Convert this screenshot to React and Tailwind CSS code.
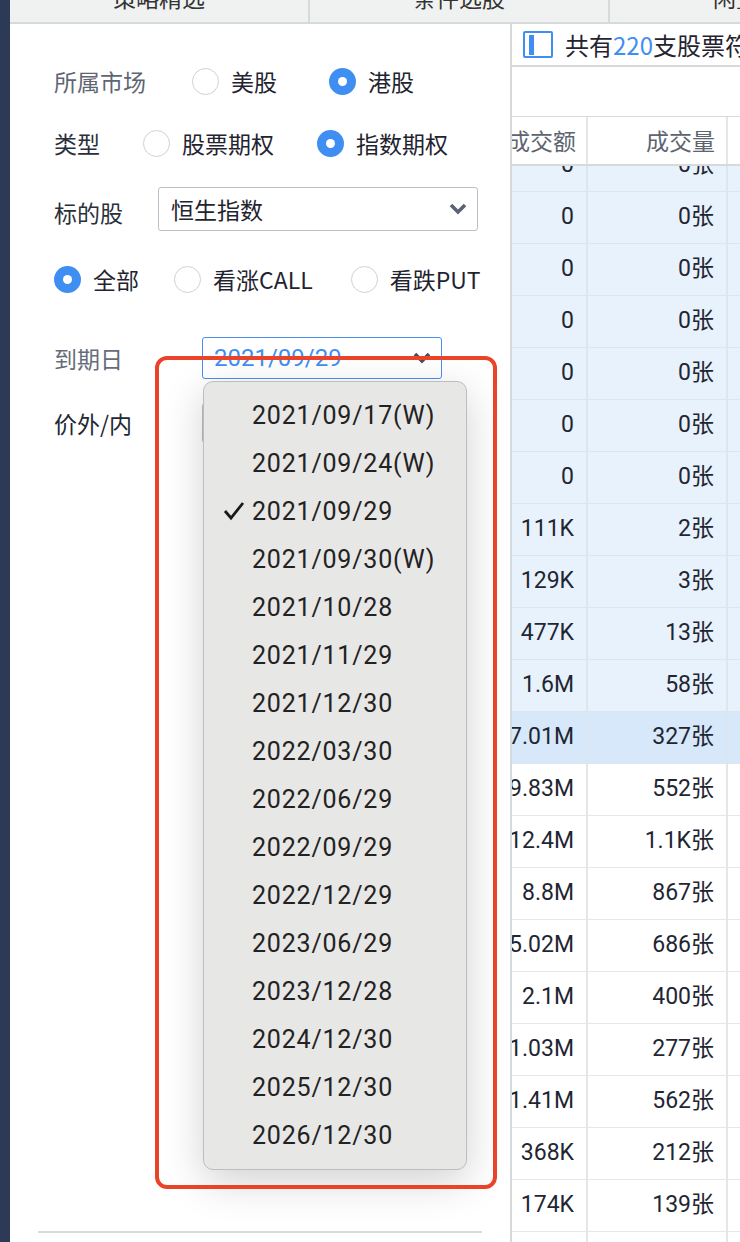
import React from "react";

const dates = [
  "2021/09/17(W)",
  "2021/09/24(W)",
  "2021/09/29",
  "2021/09/30(W)",
  "2021/10/28",
  "2021/11/29",
  "2021/12/30",
  "2022/03/30",
  "2022/06/29",
  "2022/09/29",
  "2022/12/29",
  "2023/06/29",
  "2023/12/28",
  "2024/12/30",
  "2025/12/30",
  "2026/12/30",
];

const rows = [
  ["0", "0张", "b"],
  ["0", "0张", "b"],
  ["0", "0张", "b"],
  ["0", "0张", "b"],
  ["0", "0张", "b"],
  ["0", "0张", "b"],
  ["0", "0张", "b"],
  ["111K", "2张", "b"],
  ["129K", "3张", "b"],
  ["477K", "13张", "b"],
  ["1.6M", "58张", "b"],
  ["7.01M", "327张", "s"],
  ["9.83M", "552张", "w"],
  ["12.4M", "1.1K张", "w"],
  ["8.8M", "867张", "w"],
  ["5.02M", "686张", "w"],
  ["2.1M", "400张", "w"],
  ["1.03M", "277张", "w"],
  ["1.41M", "562张", "w"],
  ["368K", "212张", "w"],
  ["174K", "139张", "w"],
  ["", "", "w"],
];

function Radio({ checked }) {
  return checked ? (
    <span className="flex h-[27px] w-[27px] shrink-0 items-center justify-center rounded-full bg-[#3f8ef2]">
      <span className="h-[9px] w-[9px] rounded-full bg-white" />
    </span>
  ) : (
    <span className="h-[27px] w-[27px] shrink-0 rounded-full border border-[#cdd1d7] bg-white" />
  );
}

function Chevron({ color = "#5b6472" }) {
  return (
    <svg width="18" height="12" viewBox="0 0 18 12">
      <polyline points="2,2 9,9 16,2" fill="none" stroke={color} strokeWidth="3.6" strokeLinejoin="miter" />
    </svg>
  );
}

function Opt({ checked, label, gapAfter = "" }) {
  return (
    <div className={`flex items-center ${gapAfter}`}>
      <Radio checked={checked} />
      <span className="ml-[12px] text-[23px] leading-none text-[#1f2430]">{label}</span>
    </div>
  );
}

export default function App() {
  const cjk = "font-['Noto_Sans_CJK_SC','Noto_Sans',sans-serif]";
  return (
    <div className={`relative flex h-[1242px] w-[740px] overflow-hidden bg-white ${cjk}`}>
      <div className="w-[10px] shrink-0 bg-[#2c3a57]" />
      <div className="flex min-w-0 flex-1 flex-col">
        {/* tabs */}
        <div className="flex h-[24px] shrink-0 overflow-hidden border-b-2 border-[#d6dadd] bg-[#f0f2f2]">
          {["策略精选", "条件选股", "闲置选股"].map((t) => (
            <div key={t} className="flex w-[300px] shrink-0 justify-center border-r-2 border-[#d6dadd]">
              <span className="-mt-[19px] whitespace-nowrap text-[23px] leading-[32px] text-[#333]">{t}</span>
            </div>
          ))}
        </div>

        <div className="flex min-h-0 flex-1">
          {/* left panel */}
          <div className="flex w-[502px] shrink-0 flex-col border-r-2 border-[#d6dadd] pl-[44px]">
            <div className="mt-[35px] flex h-[44px] items-center">
              <span className="w-[138px] text-[23px] leading-none text-[#5f6673]">所属市场</span>
              <Opt checked={false} label="美股" gapAfter="mr-[52px]" />
              <Opt checked={true} label="港股" />
            </div>
            <div className="mt-[18px] flex h-[44px] items-center">
              <span className="w-[89px] text-[23px] leading-none text-[#2a303b]">类型</span>
              <Opt checked={false} label="股票期权" gapAfter="mr-[43px]" />
              <Opt checked={true} label="指数期权" />
            </div>
            <div className="mt-[22px] flex h-[44px] items-center">
              <span className="w-[104px] pt-[6px] text-[23px] leading-none text-[#2a303b]">标的股</span>
              <div className="flex h-[44px] w-[320px] items-center justify-between rounded-[3px] border border-[#b9bfc8] pl-[12px] pr-[10px]">
                <span className="text-[23px] leading-none text-[#1f2430]">恒生指数</span>
                <Chevron />
              </div>
            </div>
            <div className="mt-[26px] flex h-[44px] items-center">
              <Opt checked={true} label="全部" gapAfter="mr-[35px]" />
              <Opt checked={false} label="看涨CALL" gapAfter="mr-[38px]" />
              <Opt checked={false} label="看跌PUT" />
            </div>
            <div className="mt-[36px] flex h-[42px] items-center">
              <span className="w-[148px] text-[23px] leading-none text-[#666c78]">到期日</span>
              <div className="flex h-[42px] w-[240px] items-center justify-between rounded-[3px] border border-[#4a8ef2] pl-[11px] pr-[10px]">
                <span className="font-['Roboto',sans-serif] text-[24px] leading-none text-[#3f8ef2]">2021/09/29</span>
                <Chevron color="#4a4f57" />
              </div>
            </div>
            <div className="mt-[24px] flex h-[40px] items-center">
              <span className="w-[148px] text-[23px] leading-none text-[#222833]">价外/内</span>
              <div className="h-[40px] w-[240px] rounded-[3px] border border-[#b9bfc8]" />
            </div>
            <div className="mb-[9px] ml-[-16px] mt-auto h-[2px] w-[444px] bg-[#d6dadd]" />
          </div>

          {/* right panel */}
          <div className="flex min-w-0 flex-1 flex-col">
            <div className="flex h-[43px] shrink-0 items-center overflow-hidden whitespace-nowrap border-b-2 border-[#d6dadd] pl-[11px]">
              <span className="flex h-[27px] w-[30px] shrink-0 items-center rounded-[2px] border-2 border-[#3f8ef2] pl-[4px]">
                <span className="h-[20px] w-[5px] bg-[#3f8ef2]" />
              </span>
              <span className="ml-[12px] text-[24px] leading-none text-[#1f2430]">
                共有<span className="text-[#3f8ef2]">220</span>支股票符合条件
              </span>
            </div>
            <div className="h-[50px] shrink-0 border-b border-[#d6dadd]" />
            <div className="flex h-[49px] shrink-0 border-b-2 border-[#d6dadd] text-[23px] text-[#5d6470]">
              <div className="flex w-[76px] shrink-0 items-center justify-end overflow-hidden whitespace-nowrap border-r-2 border-[#e3e6e9] pr-[10px]">成交额</div>
              <div className="flex w-[140px] shrink-0 items-center justify-end overflow-hidden whitespace-nowrap border-r-2 border-[#e3e6e9] pr-[11px]">成交量</div>
              <div className="flex-1" />
            </div>
            <div className="min-h-0 flex-1 overflow-hidden">
              <div className="-mt-[26px] font-['Roboto','Noto_Sans_CJK_SC',sans-serif] text-[23px] text-[#1f2633]">
                {rows.map((r, i) => {
                  const bg = r[2] === "b" ? "bg-[#e8f2fc]" : r[2] === "s" ? "bg-[#d6e8f9]" : "bg-white";
                  const line = r[2] === "w" ? "border-[#e4e7ea]" : "border-[#dde5ee]";
                  return (
                    <div key={i} className={`flex h-[52px] border-b ${line} ${bg}`}>
                      <div className={`flex w-[76px] shrink-0 items-center justify-end overflow-hidden whitespace-nowrap border-r-2 ${line} pr-[12px]`}>{r[0]}</div>
                      <div className={`flex w-[140px] shrink-0 items-center justify-end overflow-hidden whitespace-nowrap border-r-2 ${line} pr-[12px]`}>{r[1]}</div>
                      <div className="flex-1" />
                    </div>
                  );
                })}
              </div>
            </div>
          </div>
        </div>
      </div>

      {/* dropdown menu overlay */}
      <div className="absolute left-[203px] top-[381px] h-[789px] w-[264px] rounded-[10px] border border-[#bdbdbd] bg-[#e7e7e6] pt-[9px] shadow-[0_12px_40px_rgba(0,0,0,0.18)]">
        {dates.map((d) => (
          <div key={d} className="relative flex h-[48px] items-center pl-[48px] font-['Roboto',sans-serif] text-[25px] leading-none tracking-[0.8px] text-[#222]">
            {d === "2021/09/29" && (
              <svg className="absolute left-[19px] top-[14px]" width="22" height="20" viewBox="0 0 22 20">
                <polyline points="2,10 8,17 20,2" fill="none" stroke="#1a1a1a" strokeWidth="2.8" />
              </svg>
            )}
            {d}
          </div>
        ))}
      </div>

      {/* red annotation box */}
      <div className="pointer-events-none absolute left-[155px] top-[356px] h-[833px] w-[342px] rounded-[12px] border-4 border-[#e9432a]" />
    </div>
  );
}
